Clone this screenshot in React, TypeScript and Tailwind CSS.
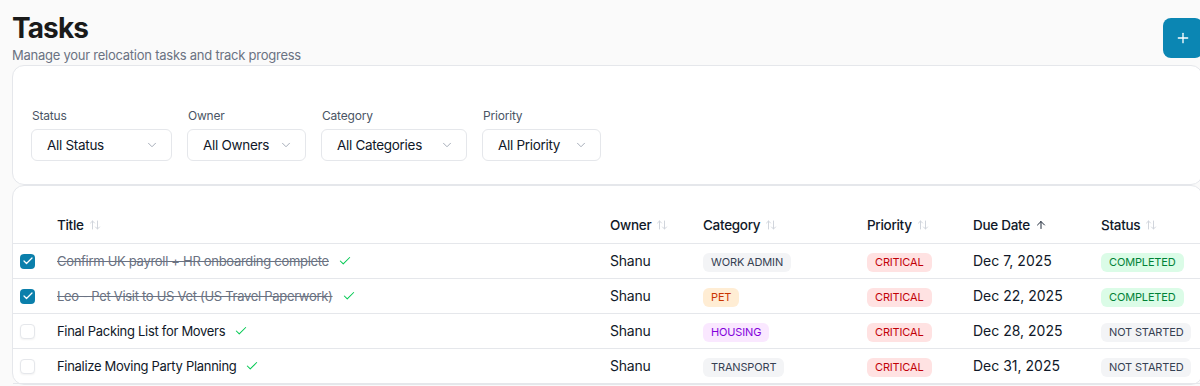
import React from 'react';
import { ArrowUpDown, ArrowUp, Check, ChevronDown, Plus } from 'lucide-react';

type Task = {
  title: string;
  done: boolean;
  owner: string;
  category: string;
  priority: string;
  due: string;
  status: string;
};

const tasks: Task[] = [
  { title: 'Confirm UK payroll + HR onboarding complete', done: true, owner: 'Shanu', category: 'WORK ADMIN', priority: 'CRITICAL', due: 'Dec 7, 2025', status: 'COMPLETED' },
  { title: 'Leo - Pet Visit to US Vet (US Travel Paperwork)', done: true, owner: 'Shanu', category: 'PET', priority: 'CRITICAL', due: 'Dec 22, 2025', status: 'COMPLETED' },
  { title: 'Final Packing List for Movers', done: false, owner: 'Shanu', category: 'HOUSING', priority: 'CRITICAL', due: 'Dec 28, 2025', status: 'NOT STARTED' },
  { title: 'Finalize Moving Party Planning', done: false, owner: 'Shanu', category: 'TRANSPORT', priority: 'CRITICAL', due: 'Dec 31, 2025', status: 'NOT STARTED' },
];

const badgeColors: Record<string, string> = {
  'WORK ADMIN': 'bg-gray-100 text-gray-700',
  TRANSPORT: 'bg-gray-100 text-gray-700',
  PET: 'bg-orange-100 text-orange-700',
  HOUSING: 'bg-fuchsia-100 text-purple-700',
  CRITICAL: 'bg-red-100 text-red-700',
  COMPLETED: 'bg-green-100 text-green-700',
  'NOT STARTED': 'bg-gray-100 text-gray-700',
};

const Badge: React.FC<{ label: string }> = ({ label }) => (
  <span className={`inline-flex items-center rounded-md px-2 py-0.5 text-[11px] leading-[15px] font-normal tracking-[-0.15px] ${badgeColors[label]}`}>
    {label}
  </span>
);

const FilterSelect: React.FC<{ label: string; value: string; width: string }> = ({ label, value, width }) => (
  <div className="flex flex-col gap-[5px]">
    <span className="text-xs leading-4 tracking-[-0.2px] text-gray-600 pl-[1px]">{label}</span>
    <div className={`flex h-8 items-center justify-between rounded-md border border-gray-200 bg-white pl-[15px] pr-3 text-[13.5px] tracking-[-0.3px] text-gray-900 ${width}`}>
      <span>{value}</span>
      <ChevronDown className="h-3.5 w-3.5 text-gray-400" strokeWidth={1.5} />
    </div>
  </div>
);

const gridCols = 'grid grid-cols-[37px_553px_93px_164px_106px_128px_1fr]';

const HeaderCell: React.FC<{ label: string; active?: boolean }> = ({ label, active }) => (
  <div className="flex items-center gap-[5px] pl-[7px] text-[13.5px] tracking-[-0.3px] font-medium text-gray-900">
    {label}
    {active ? (
      <ArrowUp className="h-3 w-3 text-gray-800" strokeWidth={2} />
    ) : (
      <ArrowUpDown className="h-3 w-3 text-gray-300" strokeWidth={2} />
    )}
  </div>
);

export default function App() {
  return (
    <div className="h-[386px] w-screen overflow-hidden bg-[#fafafa]" style={{ fontFamily: 'Inter, "Noto Sans", sans-serif' }}>
      <div className="w-[1215px] px-3 pt-3">
        <div className="flex items-start justify-between">
          <div>
            <h1 className="text-[28px] leading-[33px] font-bold tracking-[-0.9px] text-[#1a1a1a]">Tasks</h1>
            <p className="text-[13px] leading-5 tracking-[-0.25px] text-gray-500">Manage your relocation tasks and track progress</p>
          </div>
          <button className="mt-[6px] flex h-10 w-10 items-center justify-center rounded-lg bg-[#0b86b3] text-white">
            <Plus className="h-4 w-4" strokeWidth={2} />
          </button>
        </div>

        <div className="rounded-xl border border-gray-200 bg-white px-[18px] pt-[42px] pb-[23px]">
          <div className="flex gap-[15px]">
            <FilterSelect label="Status" value="All Status" width="w-[141px]" />
            <FilterSelect label="Owner" value="All Owners" width="w-[119px]" />
            <FilterSelect label="Category" value="All Categories" width="w-[146px]" />
            <FilterSelect label="Priority" value="All Priority" width="w-[119px]" />
          </div>
        </div>

        <div className="rounded-xl border border-gray-200 bg-white pt-[21px]">
          <div className={`${gridCols} h-[37px] items-center border-b border-gray-200`}>
            <div />
            <HeaderCell label="Title" />
            <HeaderCell label="Owner" />
            <HeaderCell label="Category" />
            <HeaderCell label="Priority" />
            <HeaderCell label="Due Date" active />
            <HeaderCell label="Status" />
          </div>
          {tasks.map((t) => (
            <div key={t.title} className={`${gridCols} h-[35px] items-center border-b border-gray-200 text-sm text-gray-900`}>
              <div className="pl-[7px]">
                {t.done ? (
                  <div className="flex h-[15px] w-[15px] items-center justify-center rounded-[4px] bg-[#0b7fab]">
                    <Check className="h-3 w-3 text-white" strokeWidth={2.5} />
                  </div>
                ) : (
                  <div className="h-[15px] w-[15px] rounded-[4px] border border-gray-200 bg-white shadow-xs" />
                )}
              </div>
              <div className="flex items-center gap-[9px] pl-[7px]">
                <span className={`text-[13px] tracking-[-0.3px] ${t.done ? 'text-gray-500 line-through' : ''}`}>{t.title}</span>
                <Check className="h-3.5 w-3.5 text-green-500" strokeWidth={1.75} />
              </div>
              <div className="pl-[7px] tracking-[-0.2px]">{t.owner}</div>
              <div className="pl-[7px]"><Badge label={t.category} /></div>
              <div className="pl-[7px]"><Badge label={t.priority} /></div>
              <div className="pl-[7px]">{t.due}</div>
              <div className="pl-[7px]"><Badge label={t.status} /></div>
            </div>
          ))}
        </div>
      </div>
    </div>
  );
}
